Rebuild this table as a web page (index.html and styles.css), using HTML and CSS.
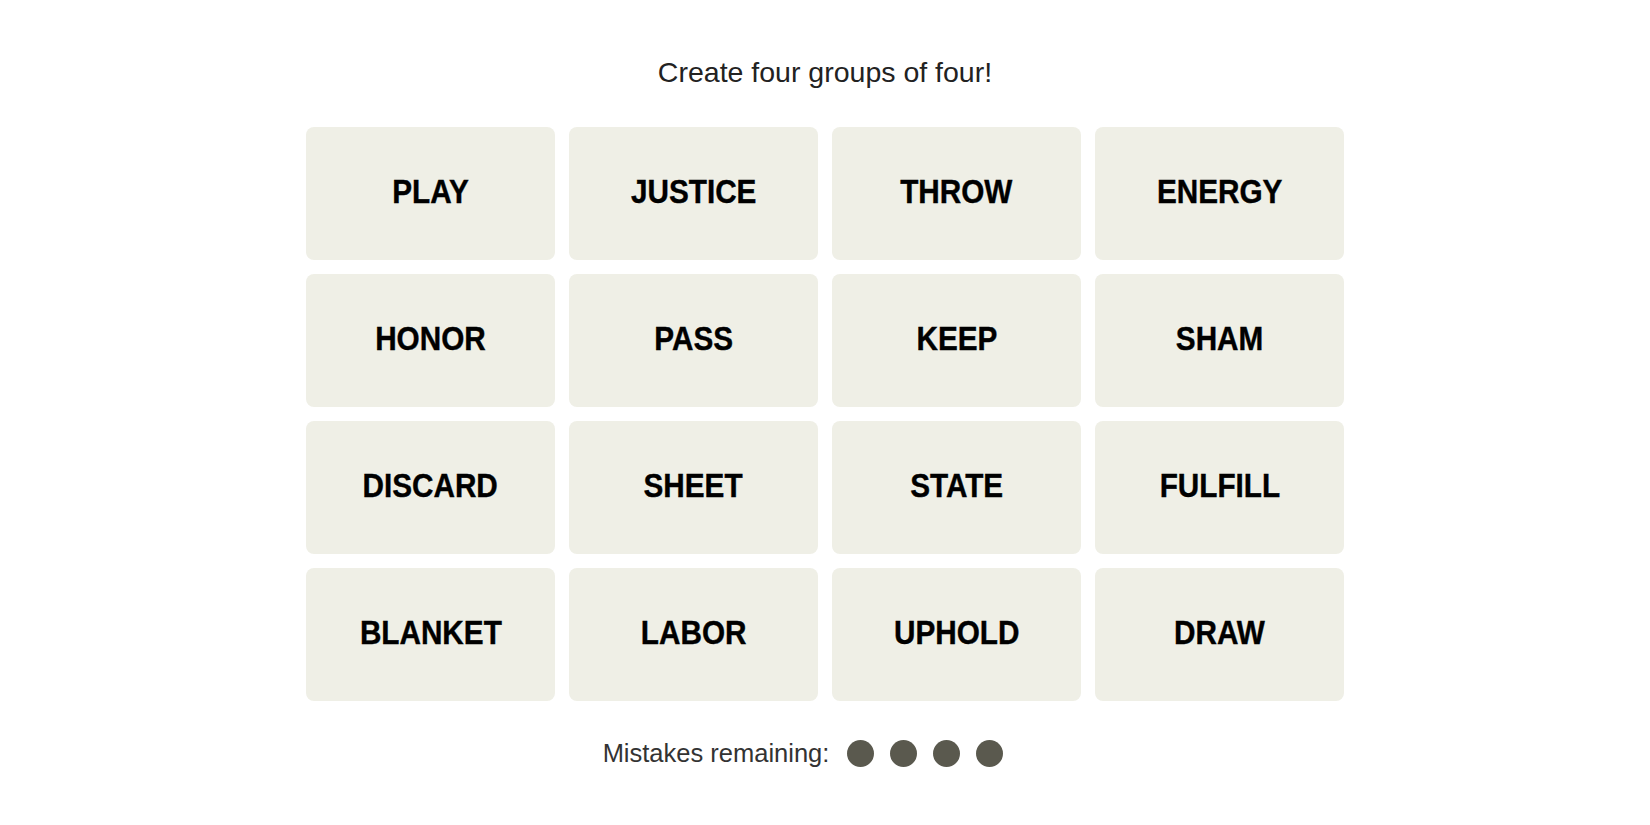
FILE: index.html
```html
<!DOCTYPE html>
<html lang="en">
<head>
<meta charset="utf-8">
<title>Connections</title>
<link rel="stylesheet" href="styles.css">
</head>
<body>
<main class="game">
  <p class="prompt">Create four groups of four!</p>
  <div class="board">
    <button class="tile"><span class="word">PLAY</span></button>
    <button class="tile"><span class="word">JUSTICE</span></button>
    <button class="tile"><span class="word">THROW</span></button>
    <button class="tile"><span class="word">ENERGY</span></button>
    <button class="tile"><span class="word">HONOR</span></button>
    <button class="tile"><span class="word">PASS</span></button>
    <button class="tile"><span class="word">KEEP</span></button>
    <button class="tile"><span class="word">SHAM</span></button>
    <button class="tile"><span class="word">DISCARD</span></button>
    <button class="tile"><span class="word">SHEET</span></button>
    <button class="tile"><span class="word">STATE</span></button>
    <button class="tile"><span class="word">FULFILL</span></button>
    <button class="tile"><span class="word">BLANKET</span></button>
    <button class="tile"><span class="word">LABOR</span></button>
    <button class="tile"><span class="word">UPHOLD</span></button>
    <button class="tile"><span class="word">DRAW</span></button>
  </div>
  <div class="mistakes">
    <span class="mistakes-label">Mistakes remaining:</span>
    <span class="bubbles">
      <span class="bubble"></span>
      <span class="bubble"></span>
      <span class="bubble"></span>
      <span class="bubble"></span>
    </span>
  </div>
</main>
</body>
</html>
```

FILE: styles.css
```css
html, body {
  margin: 0;
  padding: 0;
  background: #ffffff;
}

body {
  font-family: "Liberation Sans", Arial, sans-serif;
  color: #121212;
}

.game {
  display: flex;
  flex-direction: column;
  align-items: center;
  padding-top: 54px;
  padding-bottom: 40px;
}

.prompt {
  margin: 0;
  font-size: 28.5px;
  line-height: 36px;
  font-weight: 400;
  color: #222222;
}

.board {
  margin-top: 37px;
  display: grid;
  grid-template-columns: repeat(4, 249px);
  grid-auto-rows: 133px;
  gap: 14px;
}

.tile {
  border: none;
  margin: 0;
  padding: 0 0 4px 0;
  background: #efefe6;
  border-radius: 8px;
  display: flex;
  align-items: center;
  justify-content: center;
  font-family: "Liberation Sans", Arial, sans-serif;
  font-weight: 700;
  font-size: 33px;
  line-height: 36px;
  color: #000000;
  -webkit-text-stroke: 0.4px #000000;
  cursor: pointer;
}

.word {
  display: inline-block;
  transform: scaleX(0.9);
  transform-origin: center;
  white-space: nowrap;
}

.mistakes {
  margin-top: 34px;
  display: flex;
  align-items: center;
  padding-right: 44px;
}

.mistakes-label {
  font-size: 25.5px;
  line-height: 36px;
  color: #333333;
  margin-right: 18px;
}

.bubbles {
  display: flex;
  gap: 16px;
}

.bubble {
  width: 27px;
  height: 27px;
  border-radius: 50%;
  background: #5a594e;
}
```
